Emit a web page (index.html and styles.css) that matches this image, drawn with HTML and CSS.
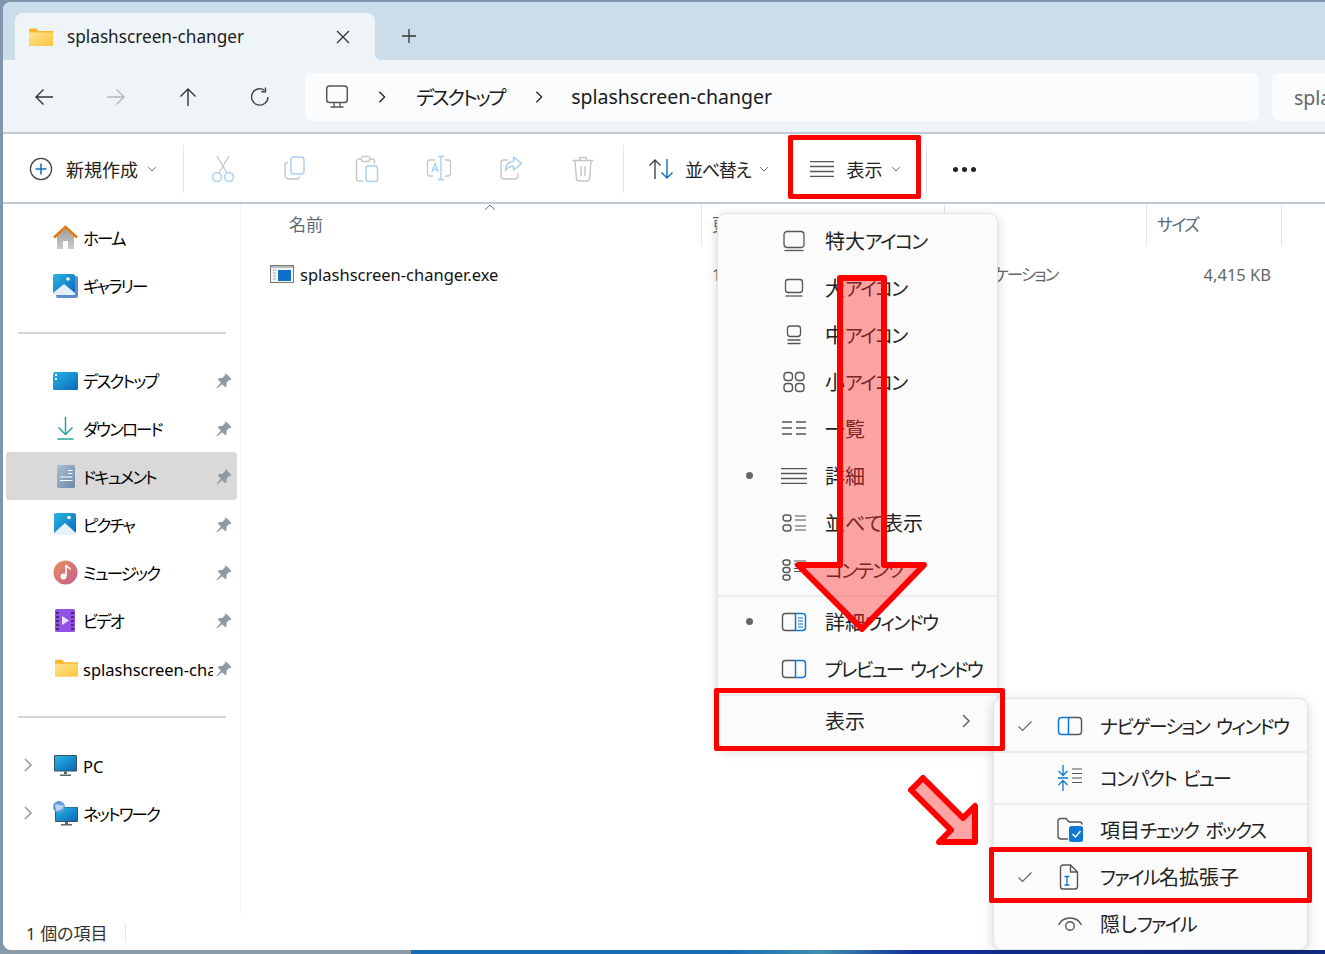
FILE: index.html
```html
<!DOCTYPE html>
<html lang="ja">
<head>
<meta charset="utf-8">
<title>splashscreen-changer</title>
<link rel="stylesheet" href="styles.css">
</head>
<body>
<svg class="defs" width="0" height="0" aria-hidden="true">
  <defs>
    <linearGradient id="gFolder" x1="0" y1="0" x2="1" y2="1"><stop offset="0" stop-color="#ffe591"/><stop offset="1" stop-color="#fcc33c"/></linearGradient>
    <linearGradient id="gBlue" x1="0" y1="0" x2="1" y2="1"><stop offset="0" stop-color="#27b6e4"/><stop offset="1" stop-color="#0a66b8"/></linearGradient>
    <linearGradient id="gHome" x1="0" y1="0" x2="0" y2="1"><stop offset="0" stop-color="#9d9d9d"/><stop offset="1" stop-color="#cdcdcd"/></linearGradient>
    <linearGradient id="gDoc" x1="0" y1="0" x2="1" y2="1"><stop offset="0" stop-color="#a9bdd3"/><stop offset="1" stop-color="#6c8aa6"/></linearGradient>
    <linearGradient id="gMusic" x1="0" y1="0" x2="1" y2="1"><stop offset="0" stop-color="#ea8f5f"/><stop offset="1" stop-color="#c25d8c"/></linearGradient>
    <symbol id="folder" viewBox="0 0 24 18"><path d="M0 2a1.500 1.500 0 0 1 1.500-1.500h6l2 2.500H24v14.500H0z" fill="#f9b52c"/><path d="M0 4.500h24V18H0z" fill="url(#gFolder)"/></symbol>
    <symbol id="pin" viewBox="0 0 16 16"><path d="M10 .5L15.500 6l-1.300 1.300-1.200-.2-2.500 2.700.1 3-1.400 1.400-3-3L1 15.500.5 15l4.300-5.600-3-3L3.200 5l3 .1 2.700-2.500-.2-1.200z" fill="#8f9aa3"/></symbol>
    <symbol id="chev" viewBox="0 0 12 16"><path d="M3 2l6 6-6 6" fill="none" stroke="currentColor" stroke-width="1.500"/></symbol>
    <symbol id="down" viewBox="0 0 10 6"><path d="M1 1l4 4 4-4" fill="none" stroke="#777" stroke-width="1"/></symbol>
    <symbol id="lines4" viewBox="0 0 24 16"><path d="M0 .6h24M0 5.500h24M0 10.500h24M0 15.400h24" fill="none" stroke="#555" stroke-width="1.300"/></symbol>
    <symbol id="check" viewBox="0 0 16 12"><path d="M1.500 6.500l4 4 9-9" fill="none" stroke="#666" stroke-width="1.200"/></symbol>
  </defs>
</svg>

<div class="desktop">
  <div class="window">
    <header class="titlebar">
      <div class="tab">
        <svg class="tab-folder" width="24" height="18"><use href="#folder"/></svg>
        <span class="tab-title">splashscreen-changer</span>
        <svg class="tab-close" width="14" height="14" viewBox="0 0 14 14"><path d="M1 1l12 12M13 1L1 13" stroke="#333" stroke-width="1.300" fill="none"/></svg>
      </div>
      <svg class="tab-plus" width="16" height="16" viewBox="0 0 16 16"><path d="M8 1v14M1 8h14" stroke="#333" stroke-width="1.300" fill="none"/></svg>
    </header>

    <nav class="navbar">
      <div class="navbtn"><svg width="20" height="20" viewBox="0 0 20 20"><path d="M19 10H2M9.500 2.500L2 10l7.500 7.500" fill="none" stroke="#333" stroke-width="1.400"/></svg></div>
      <div class="navbtn"><svg width="20" height="20" viewBox="0 0 20 20"><path d="M1 10h17M10.500 2.500L18 10l-7.500 7.500" fill="none" stroke="#b5b8bb" stroke-width="1.400"/></svg></div>
      <div class="navbtn"><svg width="20" height="20" viewBox="0 0 20 20"><path d="M10 19V2M2.500 9.500L10 2l7.500 7.500" fill="none" stroke="#333" stroke-width="1.400"/></svg></div>
      <div class="navbtn"><svg width="20" height="20" viewBox="0 0 20 20"><path d="M14.500 3.200A8.200 8.200 0 1 0 18 10" fill="none" stroke="#444" stroke-width="1.400"/><path d="M15.500 .5v4.200h-4.300" fill="none" stroke="#444" stroke-width="1.400"/></svg></div>
      <div class="crumbs">
        <svg class="crumb-pc" width="24" height="24" viewBox="0 0 24 24"><rect x="1.700" y="1" width="20.600" height="16.500" rx="2.800" fill="none" stroke="#555" stroke-width="1.500"/><path d="M9 18v3.500M15 18v3.500M5.500 22h13" stroke="#555" stroke-width="1.300" fill="none"/></svg>
        <svg class="crumb-sep first" width="12" height="14"><use href="#chev"/></svg>
        <span class="crumb-text k">デスクトップ</span>
        <svg class="crumb-sep second" width="12" height="14"><use href="#chev"/></svg>
        <span class="crumb-text">splashscreen-changer</span>
      </div>
      <div class="searchbox">splashscreen-changerの検索</div>
    </nav>

    <div class="toolbar">
      <div class="tool tool-new">
        <svg width="24" height="24" viewBox="0 0 24 24"><circle cx="12" cy="12" r="10.600" fill="none" stroke="#444" stroke-width="1.300"/><path d="M12 6.500v11M6.500 12h11" stroke="#0f6cbd" stroke-width="1.500"/></svg>
        <span class="tool-label">新規作成</span>
        <svg class="tool-down" width="10" height="6"><use href="#down"/></svg>
      </div>
      <span class="tool-sep sep-a"></span>
      <div class="ghosts">
        <div class="ghost"><svg width="24" height="28" viewBox="0 0 24 28"><path d="M6 1l10 17M18 1L8 18" stroke="#c6c6c6" stroke-width="1.300" fill="none"/><circle cx="6" cy="22" r="4.400" fill="none" stroke="#a9d1f2" stroke-width="1.500"/><circle cx="18" cy="22" r="4.400" fill="none" stroke="#a9d1f2" stroke-width="1.500"/></svg></div>
        <div class="ghost"><svg width="24" height="26" viewBox="0 0 24 26"><rect x="8" y="2" width="13" height="17" rx="3" fill="none" stroke="#a9d1f2" stroke-width="1.500"/><path d="M5 7.500A3 3 0 0 0 2 10.500v9a4.500 4.500 0 0 0 4.500 4.500h7a3 3 0 0 0 3-2.500" fill="none" stroke="#c6c6c6" stroke-width="1.400"/></svg></div>
        <div class="ghost"><svg width="24" height="28" viewBox="0 0 24 28"><path d="M6 4H4a2.500 2.500 0 0 0-2.500 2.500v17A2.500 2.500 0 0 0 4 26h4M15 4h2a2.500 2.500 0 0 1 2.500 2.500V9" fill="none" stroke="#c6c6c6" stroke-width="1.400"/><rect x="6.500" y="1.500" width="8" height="5" rx="1.500" fill="none" stroke="#c6c6c6" stroke-width="1.300"/><rect x="11" y="11" width="11.500" height="15.500" rx="2.500" fill="none" stroke="#a9d1f2" stroke-width="1.500"/></svg></div>
        <div class="ghost"><svg width="26" height="26" viewBox="0 0 26 26"><path d="M9 5H4a2.500 2.500 0 0 0-2.500 2.500v11A2.500 2.500 0 0 0 4 21h3M19 5h3a2.500 2.500 0 0 1 2.500 2.500v11A2.500 2.500 0 0 1 22 21h-3" fill="none" stroke="#c6c6c6" stroke-width="1.300"/><path d="M15 2v22M12 1.500h6M12 24.500h6M6 17L9 8.500 12 17M7 14.500h4" fill="none" stroke="#a9d1f2" stroke-width="1.400"/></svg></div>
        <div class="ghost"><svg width="24" height="26" viewBox="0 0 24 26"><path d="M9 5H5a3 3 0 0 0-3 3v13a3 3 0 0 0 3 3h11a3 3 0 0 0 3-3v-3" fill="none" stroke="#c6c6c6" stroke-width="1.400"/><path d="M14.500 2l8 6.500-8 6.500v-3.800c-4 0-6.500 1.300-8 4.500 0-5.500 3-9 8-9.500z" fill="none" stroke="#a9d1f2" stroke-width="1.500" stroke-linejoin="round"/></svg></div>
        <div class="ghost"><svg width="24" height="28" viewBox="0 0 24 28"><path d="M1.500 5.500h21M8.500 5V2.500h7V5M4 6l1.500 18a2.500 2.500 0 0 0 2.500 2h8a2.500 2.500 0 0 0 2.500-2L20 6M10 11v10M14 11v10" fill="none" stroke="#c6c6c6" stroke-width="1.400"/></svg></div>
      </div>
      <span class="tool-sep sep-b"></span>
      <div class="tool tool-sort">
        <svg width="26" height="22" viewBox="0 0 26 22"><path d="M7 21V2M1.500 7.500L7 2l5.500 5.500" fill="none" stroke="#444" stroke-width="1.400"/><path d="M19 1v19M13.500 14.500L19 20l5.500-5.500" fill="none" stroke="#0f6cbd" stroke-width="1.400"/></svg>
        <span class="tool-label sort-label">並べ替え</span>
        <svg class="tool-down" width="10" height="6"><use href="#down"/></svg>
      </div>
      <div class="tool tool-view">
        <svg width="24" height="16"><use href="#lines4"/></svg>
        <span class="tool-label">表示</span>
        <svg class="tool-down" width="10" height="6"><use href="#down"/></svg>
      </div>
      <span class="tool-sep sep-c"></span>
      <div class="dots"><i></i><i></i><i></i></div>
    </div>

    <div class="main">
      <aside class="sidebar">
        <div class="side-row"><span class="slot"></span><svg class="side-icon" width="25" height="25" viewBox="0 0 25 25"><path d="M4 11l8.500-7.500L21 11v13H15v-8h-5v8H4z" fill="url(#gHome)"/><path d="M1 12.500L12.500 2 24 12.500" fill="none" stroke="#e27a10" stroke-width="2.600"/></svg><span class="side-label k">ホーム</span></div>
        <div class="side-row"><span class="slot"></span><svg class="side-icon" width="25" height="25" viewBox="0 0 25 25"><rect x="3" y="3" width="22" height="22" rx="2" fill="#5d8fd0"/><rect x="0" y="1" width="22" height="21" rx="2" fill="url(#gBlue)"/><path d="M0 20l11-9 11 9v2H0z" fill="#e3f0fb"/><circle cx="15" cy="6" r="1.800" fill="#fff"/></svg><span class="side-label k">ギャラリー</span></div>
        <div class="side-div"></div>
        <div class="side-row"><span class="slot"></span><svg class="side-icon" width="25" height="25" viewBox="0 0 25 25"><rect x="0" y="4" width="25" height="18" rx="1.500" fill="url(#gBlue)"/><rect x="2" y="6" width="2" height="2" fill="#fff"/><rect x="2" y="10" width="2" height="2" fill="#e6f6ff"/></svg><span class="side-label k">デスクトップ</span><svg class="side-pin" width="16" height="16"><use href="#pin"/></svg></div>
        <div class="side-row"><span class="slot"></span><svg class="side-icon" width="25" height="25" viewBox="0 0 25 25"><path d="M12.500 1v17M5.500 11.500l7 7 7-7M4.500 23h16" fill="none" stroke="#20a898" stroke-width="1.500"/></svg><span class="side-label k">ダウンロード</span><svg class="side-pin" width="16" height="16"><use href="#pin"/></svg></div>
        <div class="side-row selected"><span class="slot"></span><svg class="side-icon" width="25" height="25" viewBox="0 0 25 25"><rect x="4" y="1" width="18" height="23" rx="1.500" fill="url(#gDoc)"/><path d="M15 6.500h4.500M15 9.500h4.500M7 13h12.500M7 16.500h12.500" stroke="#fff" stroke-width="1.200"/></svg><span class="side-label k">ドキュメント</span><svg class="side-pin" width="16" height="16"><use href="#pin"/></svg></div>
        <div class="side-row"><span class="slot"></span><svg class="side-icon" width="25" height="25" viewBox="0 0 25 25"><rect x="1" y="1" width="22" height="22" rx="2" fill="url(#gBlue)"/><path d="M1 21l11-10 11 10v2H1z" fill="#e6f1fb"/><circle cx="16" cy="5.500" r="1.800" fill="#fff"/></svg><span class="side-label k">ピクチャ</span><svg class="side-pin" width="16" height="16"><use href="#pin"/></svg></div>
        <div class="side-row"><span class="slot"></span><svg class="side-icon" width="25" height="25" viewBox="0 0 25 25"><circle cx="12.500" cy="12.500" r="12" fill="url(#gMusic)"/><path d="M13 5v11" stroke="#fff" stroke-width="1.600"/><path d="M13 5c1 2.500 3.500 2.500 4.500 4.500" stroke="#fff" stroke-width="1.600" fill="none"/><circle cx="10.500" cy="16.500" r="3" fill="#fff"/></svg><span class="side-label k">ミュージック</span><svg class="side-pin" width="16" height="16"><use href="#pin"/></svg></div>
        <div class="side-row"><span class="slot"></span><svg class="side-icon" width="25" height="25" viewBox="0 0 25 25"><rect x="2" y="1" width="20" height="23" rx="1.500" fill="#9252e6"/><path d="M3 4h3v2H3zM3 8h3v2H3zM3 12h3v2H3zM3 16h3v2H3zM3 20h3v2H3zM18 4h3v2h-3zM18 8h3v2h-3zM18 12h3v2h-3zM18 16h3v2h-3zM18 20h3v2h-3z" fill="#4a2a80"/><path d="M9 8l7 4.500-7 4.500z" fill="#e9e4fb"/></svg><span class="side-label k">ビデオ</span><svg class="side-pin" width="16" height="16"><use href="#pin"/></svg></div>
        <div class="side-row"><span class="slot"></span><svg class="side-icon folder-icon" width="23" height="18"><use href="#folder"/></svg><span class="side-label">splashscreen-changer</span><svg class="side-pin" width="16" height="16"><use href="#pin"/></svg></div>
        <div class="side-div lower"></div>
        <div class="side-row"><svg class="slot side-chev" width="12" height="16"><use href="#chev"/></svg><svg class="side-icon" width="25" height="25" viewBox="0 0 25 25"><rect x="1" y="2" width="23" height="16.500" rx="1" fill="#3c5262"/><rect x="2" y="3" width="21" height="14.500" fill="url(#gBlue)"/><path d="M11 18.500h3V21h-3zM7 21.500h11v1.500H7z" fill="#54666f"/></svg><span class="side-label">PC</span></div>
        <div class="side-row"><svg class="slot side-chev" width="12" height="16"><use href="#chev"/></svg><svg class="side-icon" width="25" height="25" viewBox="0 0 25 25"><rect x="2" y="6" width="23" height="15" rx="1" fill="#3c5262"/><rect x="3" y="6.500" width="21" height="13.500" fill="url(#gBlue)"/><path d="M12 21h3v2h-3zM8 23h11v1.500H8z" fill="#54666f"/><circle cx="6" cy="6" r="6" fill="#5f9bd8"/><path d="M2 4c3-2 5 1 7 0s2 3 0 4-5 3-6 1z" fill="#b5d6f1"/></svg><span class="side-label k">ネットワーク</span></div>
      </aside>

      <section class="files">
        <div class="file-head">
          <div class="head-cell head-name">名前<svg class="sort-caret" width="12" height="7" viewBox="0 0 12 7"><path d="M1 6l5-5 5 5" fill="none" stroke="#777" stroke-width="1"/></svg></div>
          <div class="head-cell">更新日時</div>
          <div class="head-cell">種類</div>
          <div class="head-cell head-size">サイズ</div>
        </div>
        <div class="file-row">
          <div class="file-name"><svg width="24" height="18" viewBox="0 0 24 18"><rect x=".5" y=".5" width="23" height="17" fill="#f4f4f4" stroke="#777"/><rect x="1" y="1" width="22" height="2" fill="#bbb"/><rect x="8" y="5" width="13" height="11" fill="#0c72c8"/><path d="M3 5h3M3 8h3M3 11h3M3 14h3" stroke="#aaa"/></svg><span class="file-text">splashscreen-changer.exe</span></div>
          <div class="file-cell">17/08/2024 20:15</div>
          <div class="file-cell file-type">アプリケーション</div>
          <div class="file-cell file-size">4,415 KB</div>
        </div>
      </section>
    </div>

    <footer class="status"><span class="status-text">1 個の項目</span><span class="status-sep"></span></footer>
  </div>
</div>

<div class="menu view-menu">
  <div class="mrow"><span class="mark"></span><svg class="micon" width="26" height="24" viewBox="0 0 26 24"><rect x="3" y="2.500" width="20" height="16" rx="3.200" fill="none" stroke="#555" stroke-width="1.300"/><path d="M3.500 21.500h19" stroke="#555" stroke-width="1.300"/></svg><span class="mlabel">特大<span class="mk">アイコン</span></span></div>
  <div class="mrow"><span class="mark"></span><svg class="micon" width="26" height="24" viewBox="0 0 26 24"><rect x="4.500" y="3.500" width="17" height="13" rx="2.800" fill="none" stroke="#555" stroke-width="1.300"/><path d="M4.500 20h17" stroke="#555" stroke-width="1.300"/></svg><span class="mlabel">大<span class="mk">アイコン</span></span></div>
  <div class="mrow"><span class="mark"></span><svg class="micon" width="26" height="24" viewBox="0 0 26 24"><rect x="6.500" y="3" width="13" height="10.500" rx="2.800" fill="none" stroke="#555" stroke-width="1.300"/><path d="M6.500 17h13M6.500 20.500h13" stroke="#555" stroke-width="1.300"/></svg><span class="mlabel">中<span class="mk">アイコン</span></span></div>
  <div class="mrow"><span class="mark"></span><svg class="micon" width="26" height="24" viewBox="0 0 26 24"><g fill="none" stroke="#555" stroke-width="1.400"><rect x="3" y="2.500" width="8.500" height="8" rx="3.200"/><rect x="14.500" y="2.500" width="8.500" height="8" rx="3.200"/><rect x="3" y="13.500" width="8.500" height="8" rx="3.200"/><rect x="14.500" y="13.500" width="8.500" height="8" rx="3.200"/></g></svg><span class="mlabel">小<span class="mk">アイコン</span></span></div>
  <div class="mrow"><span class="mark"></span><svg class="micon" width="26" height="24" viewBox="0 0 26 24"><path d="M1 5h10M1 11h10M1 17h10M15 5h10M15 11h10M15 17h10" stroke="#555" stroke-width="1.300"/></svg><span class="mlabel">一覧</span></div>
  <div class="mrow"><span class="mark on"></span><svg class="micon" width="26" height="16" viewBox="0 0 24 16" preserveAspectRatio="none"><use href="#lines4"/></svg><span class="mlabel">詳細</span></div>
  <div class="mrow"><span class="mark"></span><svg class="micon" width="26" height="24" viewBox="0 0 26 24"><g fill="none" stroke="#555" stroke-width="1.400"><rect x="2" y="4" width="8" height="6" rx="2.800"/><rect x="2" y="14" width="8" height="6" rx="2.800"/><path d="M14 5h11M14 9h11M14 15h11M14 19h11" stroke-width="1.200"/></g></svg><span class="mlabel">並べて表示</span></div>
  <div class="mrow"><span class="mark"></span><svg class="micon" width="26" height="24" viewBox="0 0 26 24"><g fill="none" stroke="#555" stroke-width="1.400"><rect x="2" y="2" width="7" height="5" rx="2.400"/><rect x="2" y="9.500" width="7" height="5" rx="2.400"/><rect x="2" y="17" width="7" height="5" rx="2.400"/><path d="M13 3h12M13 6h12M13 10.500h12M13 13.500h12" stroke-width="1.200"/></g></svg><span class="mlabel mk">コンテンツ</span></div>
  <div class="msep"></div>
  <div class="mrow"><span class="mark on"></span><svg class="micon" width="26" height="24" viewBox="0 0 26 24"><path d="M14 3.500H4.500A3 3 0 0 0 1.500 6.500v11a3 3 0 0 0 3 3H14" fill="none" stroke="#555" stroke-width="1.400"/><path d="M14.500 3.500h7a3 3 0 0 1 3 3v11a3 3 0 0 1-3 3h-7z" fill="none" stroke="#0f78d4" stroke-width="1.500"/><path d="M17 8h5M17 11h5M17 14h5M17 17h5" stroke="#0f78d4" stroke-width="1.100"/></svg><span class="mlabel">詳細<span class="mk">ウィンドウ</span></span></div>
  <div class="mrow"><span class="mark"></span><svg class="micon" width="26" height="24" viewBox="0 0 26 24"><path d="M14 3.500H4.500A3 3 0 0 0 1.500 6.500v11a3 3 0 0 0 3 3H14" fill="none" stroke="#555" stroke-width="1.400"/><path d="M14.500 3.500h7a3 3 0 0 1 3 3v11a3 3 0 0 1-3 3h-7z" fill="none" stroke="#0f78d4" stroke-width="1.500"/></svg><span class="mlabel mk">プレビュー ウィンドウ</span></div>
  <div class="msep"></div>
  <div class="mrow"><span class="mark"></span><span class="micon-blank"></span><span class="mlabel">表示</span><svg class="mchev" width="12" height="16"><use href="#chev"/></svg></div>
</div>

<div class="menu sub-menu">
  <div class="mrow"><svg class="smark" width="16" height="12"><use href="#check"/></svg><svg class="micon" width="26" height="24" viewBox="0 0 26 24"><path d="M12 3.500h9.500a3 3 0 0 1 3 3v11a3 3 0 0 1-3 3H12" fill="none" stroke="#555" stroke-width="1.400"/><path d="M11.500 3.500h-7a3 3 0 0 0-3 3v11a3 3 0 0 0 3 3h7z" fill="none" stroke="#0f78d4" stroke-width="1.500"/></svg><span class="mlabel mk">ナビゲーション ウィンドウ</span></div>
  <div class="msep"></div>
  <div class="mrow"><span class="smark"></span><svg class="micon" width="26" height="26" viewBox="0 0 26 26"><path d="M6 0v10M1.500 6L6 10.500 10.500 6M1 13h10M6 26V16M1.500 20L6 15.500 10.500 20" fill="none" stroke="#0f78d4" stroke-width="1.300"/><path d="M15 4h10M15 8.500h10M15 13h10M15 17.500h10" stroke="#555" stroke-width="1.200"/></svg><span class="mlabel mk">コンパクト ビュー</span></div>
  <div class="msep"></div>
  <div class="mrow"><span class="smark"></span><svg class="micon" width="26" height="26" viewBox="0 0 26 26"><path d="M11 22H4a3 3 0 0 1-3-3V4a2.500 2.500 0 0 1 2.500-2.500H9L12 5h10.500a2.500 2.500 0 0 1 2.500 2.500" fill="none" stroke="#555" stroke-width="1.400"/><rect x="12" y="9" width="14" height="16" rx="2.500" fill="#0f78d4"/><path d="M15.500 17l3 3 5-6" fill="none" stroke="#fff" stroke-width="1.500"/></svg><span class="mlabel">項目<span class="mk">チェック ボックス</span></span></div>
  <div class="mrow"><svg class="smark" width="16" height="12"><use href="#check"/></svg><svg class="micon" width="26" height="26" viewBox="0 0 26 26"><path d="M13.500 1H6a2.500 2.500 0 0 0-2.500 2.500v19A2.500 2.500 0 0 0 6 25h12a2.500 2.500 0 0 0 2.500-2.500V8zM13.500 1v7h7" fill="none" stroke="#555" stroke-width="1.400"/><path d="M7.500 12.500h5M10 12.500v8.500M7.500 21h5" fill="none" stroke="#0f78d4" stroke-width="1.300"/></svg><span class="mlabel"><span class="mk">ファイル</span>名拡張子</span></div>
  <div class="mrow"><span class="smark"></span><svg class="micon" width="26" height="24" viewBox="0 0 26 24"><path d="M1.500 13C4 8 8 6 13 6s9 2 11.500 7" fill="none" stroke="#555" stroke-width="1.400"/><circle cx="13" cy="14" r="4.300" fill="none" stroke="#555" stroke-width="1.400"/></svg><span class="mlabel">隠し<span class="mk">ファイル</span></span></div>
</div>

<div class="mark-box box-view"></div>
<div class="mark-box box-show"></div>
<div class="mark-box box-ext"></div>
<svg class="arrows" width="1325" height="954" viewBox="0 0 1325 954">
  <polygon points="840,278 884,278 884,565 924,565 862,629 798,565 840,565"/>
  <polygon points="923,778 963,818 975,806 975,842 939,842 951,830 911,790"/>
</svg>
</body>
</html>
```

FILE: styles.css
```css
* { box-sizing: border-box; }
html, body { margin: 0; height: 954px; overflow: hidden; }
body {
  position: relative;
  width: 1325px;
  font-family: "Noto Sans", "Noto Sans CJK JP", sans-serif;
  font-feature-settings: "palt";
  color: #1a1a1a;
  background: #7f97ad;
}
.k { letter-spacing: -.115em; }
.mk { font-size: .95em; letter-spacing: -.09em; word-spacing: .2em; }
.defs { position: absolute; }
.desktop {
  padding: 2px 0 4px 3px;
  height: 954px;
  background: linear-gradient(90deg, #8a9aa6 0, #8a9aa6 31%, #1a6db5 31%, #1a6db5 55%, #3f8fae 62%, #12309a 69%, #0f2c80 100%) bottom / 100% 4px no-repeat, #7f97ad;
}
.window { height: 948px; display: flex; flex-direction: column; background: #fff; border-radius: 8px 0 0 8px; overflow: hidden; }

/* title */
.titlebar { height: 58px; flex: none; display: flex; align-items: flex-start; background: #cbdcea; padding: 11px 0 0 12px; }
.tab { position: relative; width: 360px; height: 47px; background: #eff4f9; border-radius: 8px 8px 0 0; display: flex; align-items: center; padding: 0 25px 0 14px; }
.tab::after { content: ""; position: absolute; right: -6px; bottom: 0; width: 6px; height: 6px; background: radial-gradient(circle at 100% 0, transparent 6px, #eff4f9 6.500px); }
.tab-folder { flex: none; margin-right: 14px; }
.tab-title { flex: 1; font-size: 17.200px; }
.tab-close { flex: none; margin-left: 7px; }
.tab-plus { margin: 15px 0 0 26px; }

/* nav */
.navbar { height: 72px; flex: none; display: flex; align-items: center; background: #eff4f9; padding: 2px 0 0 5px; overflow: hidden; }
.navbtn { width: 72px; flex: none; display: flex; justify-content: center; }
.crumbs { width: 954px; height: 48px; flex: none; margin-left: 9px; background: #fafcfe; border-radius: 7px; display: flex; align-items: center; padding-left: 20px; font-size: 19.500px; }
.crumb-pc { flex: none; }
.crumb-sep { flex: none; color: #222; }
.crumb-text { margin-bottom: 2px; }
.crumb-sep.first { margin: 0 28px 0 27px; }
.crumb-sep.second { margin: 0 26px 0 29px; }
.searchbox { width: 200px; height: 48px; flex: none; margin-left: 13px; background: #fafcfe; border-radius: 7px; display: flex; align-items: center; padding: 0 0 2px 22px; font-size: 19.500px; color: #666; white-space: nowrap; overflow: hidden; }

/* toolbar */
.toolbar { height: 72px; flex: none; display: flex; align-items: center; background: #fff; border-top: 2px solid #bfccd8; border-bottom: 2px solid #bfccd8; padding: 2px 0 0 26px; }
.tool { display: flex; align-items: center; flex: none; }
.tool-label { font-size: 18px; color: #222; }
.tool-new .tool-label { margin-left: 13px; }
.tool-down { margin-left: 9px; }
.tool-sep { width: 1px; height: 48px; flex: none; background: #e6e6e6; }
.sep-a { margin-left: 26px; }
.ghosts { display: flex; margin-left: 3px; }
.ghost { width: 72px; display: flex; justify-content: center; }
.sep-b { margin-left: 4px; }
.tool-sort { margin-left: 24px; }
.tool-sort .tool-label { margin-left: 11px; }
.sort-label { letter-spacing: -1.300px; }
.tool-view { margin-left: 41px; }
.tool-view .tool-label { margin-left: 12px; }
.sep-c { margin-left: 25px; }
.dots { display: flex; gap: 4px; margin-left: 26px; }
.dots i { width: 5px; height: 5px; background: #222; border-radius: 50%; }

/* main */
.main { flex: 1; min-height: 0; display: flex; }
.sidebar { width: 238px; flex: none; padding-top: 9px; border-right: 1px solid #f4f4f4; font-size: 16.500px; color: #000; }
.side-row { height: 48px; margin: 0 3px; padding: 0 5px 0 16px; display: flex; align-items: center; border-radius: 3px; }
.side-row.selected { background: #d9d9d9; }
.slot { width: 12px; flex: none; margin-right: 19px; }
.side-chev { color: #999; height: 16px; }
.side-icon { flex: none; margin-right: 5px; }
.folder-icon { margin-left: 2px; margin-right: 5px; }
.side-label { width: 130px; flex: none; overflow: hidden; white-space: nowrap; margin-top: 2px; }
.side-pin { flex: none; margin: 2px 0 0 3px; }
.side-div { height: 2px; margin: 23px 14px 22px 15px; background: #d5d5d5; }
.side-div.lower { margin: 24px 14px 23px 15px; }

.files { flex: 1; min-width: 0; }
.file-head, .file-row { display: grid; grid-template-columns: 461px 243px 202px 135px; }
.file-head { height: 42px; }
.head-cell { border-right: 1px solid #e5e5e5; display: flex; align-items: center; padding: 0 0 4px 10px; font-size: 17px; color: #5d6b78; position: relative; }
.head-name { padding-left: 48px; }
.head-size { letter-spacing: -1.700px; }
.sort-caret { position: absolute; left: 243px; top: 0; }
.file-row { height: 34px; margin-top: 11px; align-items: center; font-size: 16.500px; color: #666; }
.file-name { display: flex; align-items: center; padding-left: 29px; color: #111; }
.file-text { margin-left: 6px; font-size: 16.500px; }
.file-cell { padding-left: 10px; white-space: nowrap; }
.file-type { letter-spacing: -1.900px; }
.file-size { text-align: right; padding-right: 11px; }

.status { height: 35px; flex: none; display: flex; align-items: center; padding-left: 23px; font-size: 17px; color: #333; }
.status-sep { width: 1px; height: 18px; margin-left: 17px; background: #e5e5e5; }

/* menus */
.menu { position: absolute; background: #fbfbfb; border: 1px solid #e3e3e3; border-radius: 9px; box-shadow: 0 3px 12px rgba(0,0,0,.16); font-size: 20px; color: #222; }
.view-menu { left: 717px; top: 213px; width: 281px; height: 535px; padding-top: 3px; }
.sub-menu { left: 993px; top: 698px; width: 315px; height: 252px; padding-top: 3px; }
.mrow { height: 47px; display: flex; align-items: center; }
.mark { width: 63px; flex: none; display: flex; justify-content: center; }
.mark.on::before { content: ""; width: 7px; height: 7px; background: #666; border-radius: 50%; }
.micon { flex: none; }
.view-menu .micon, .micon-blank { width: 26px; flex: none; }
.view-menu .mlabel { margin-left: 18px; }
.mlabel { white-space: nowrap; }
.mchev { margin-left: 95px; color: #666; flex: none; }
.msep { height: 2px; margin: 2px 0 1px; background: #ececec; }
.smark { width: 16px; flex: none; margin: 0 24px 0 23px; }
.sub-menu .mlabel { margin-left: 17px; }

/* annotations */
.mark-box { position: absolute; border: 5px solid #f00; border-radius: 2px; }
.box-view { left: 788px; top: 135px; width: 133px; height: 64px; }
.box-show { left: 714px; top: 688px; width: 291px; height: 63px; }
.box-ext { left: 989px; top: 847px; width: 323px; height: 56px; }
.arrows { position: absolute; left: 0; top: 0; pointer-events: none; }
.arrows polygon { fill: rgba(250,40,40,.42); stroke: #f00; stroke-width: 6; stroke-linejoin: round; }
```
